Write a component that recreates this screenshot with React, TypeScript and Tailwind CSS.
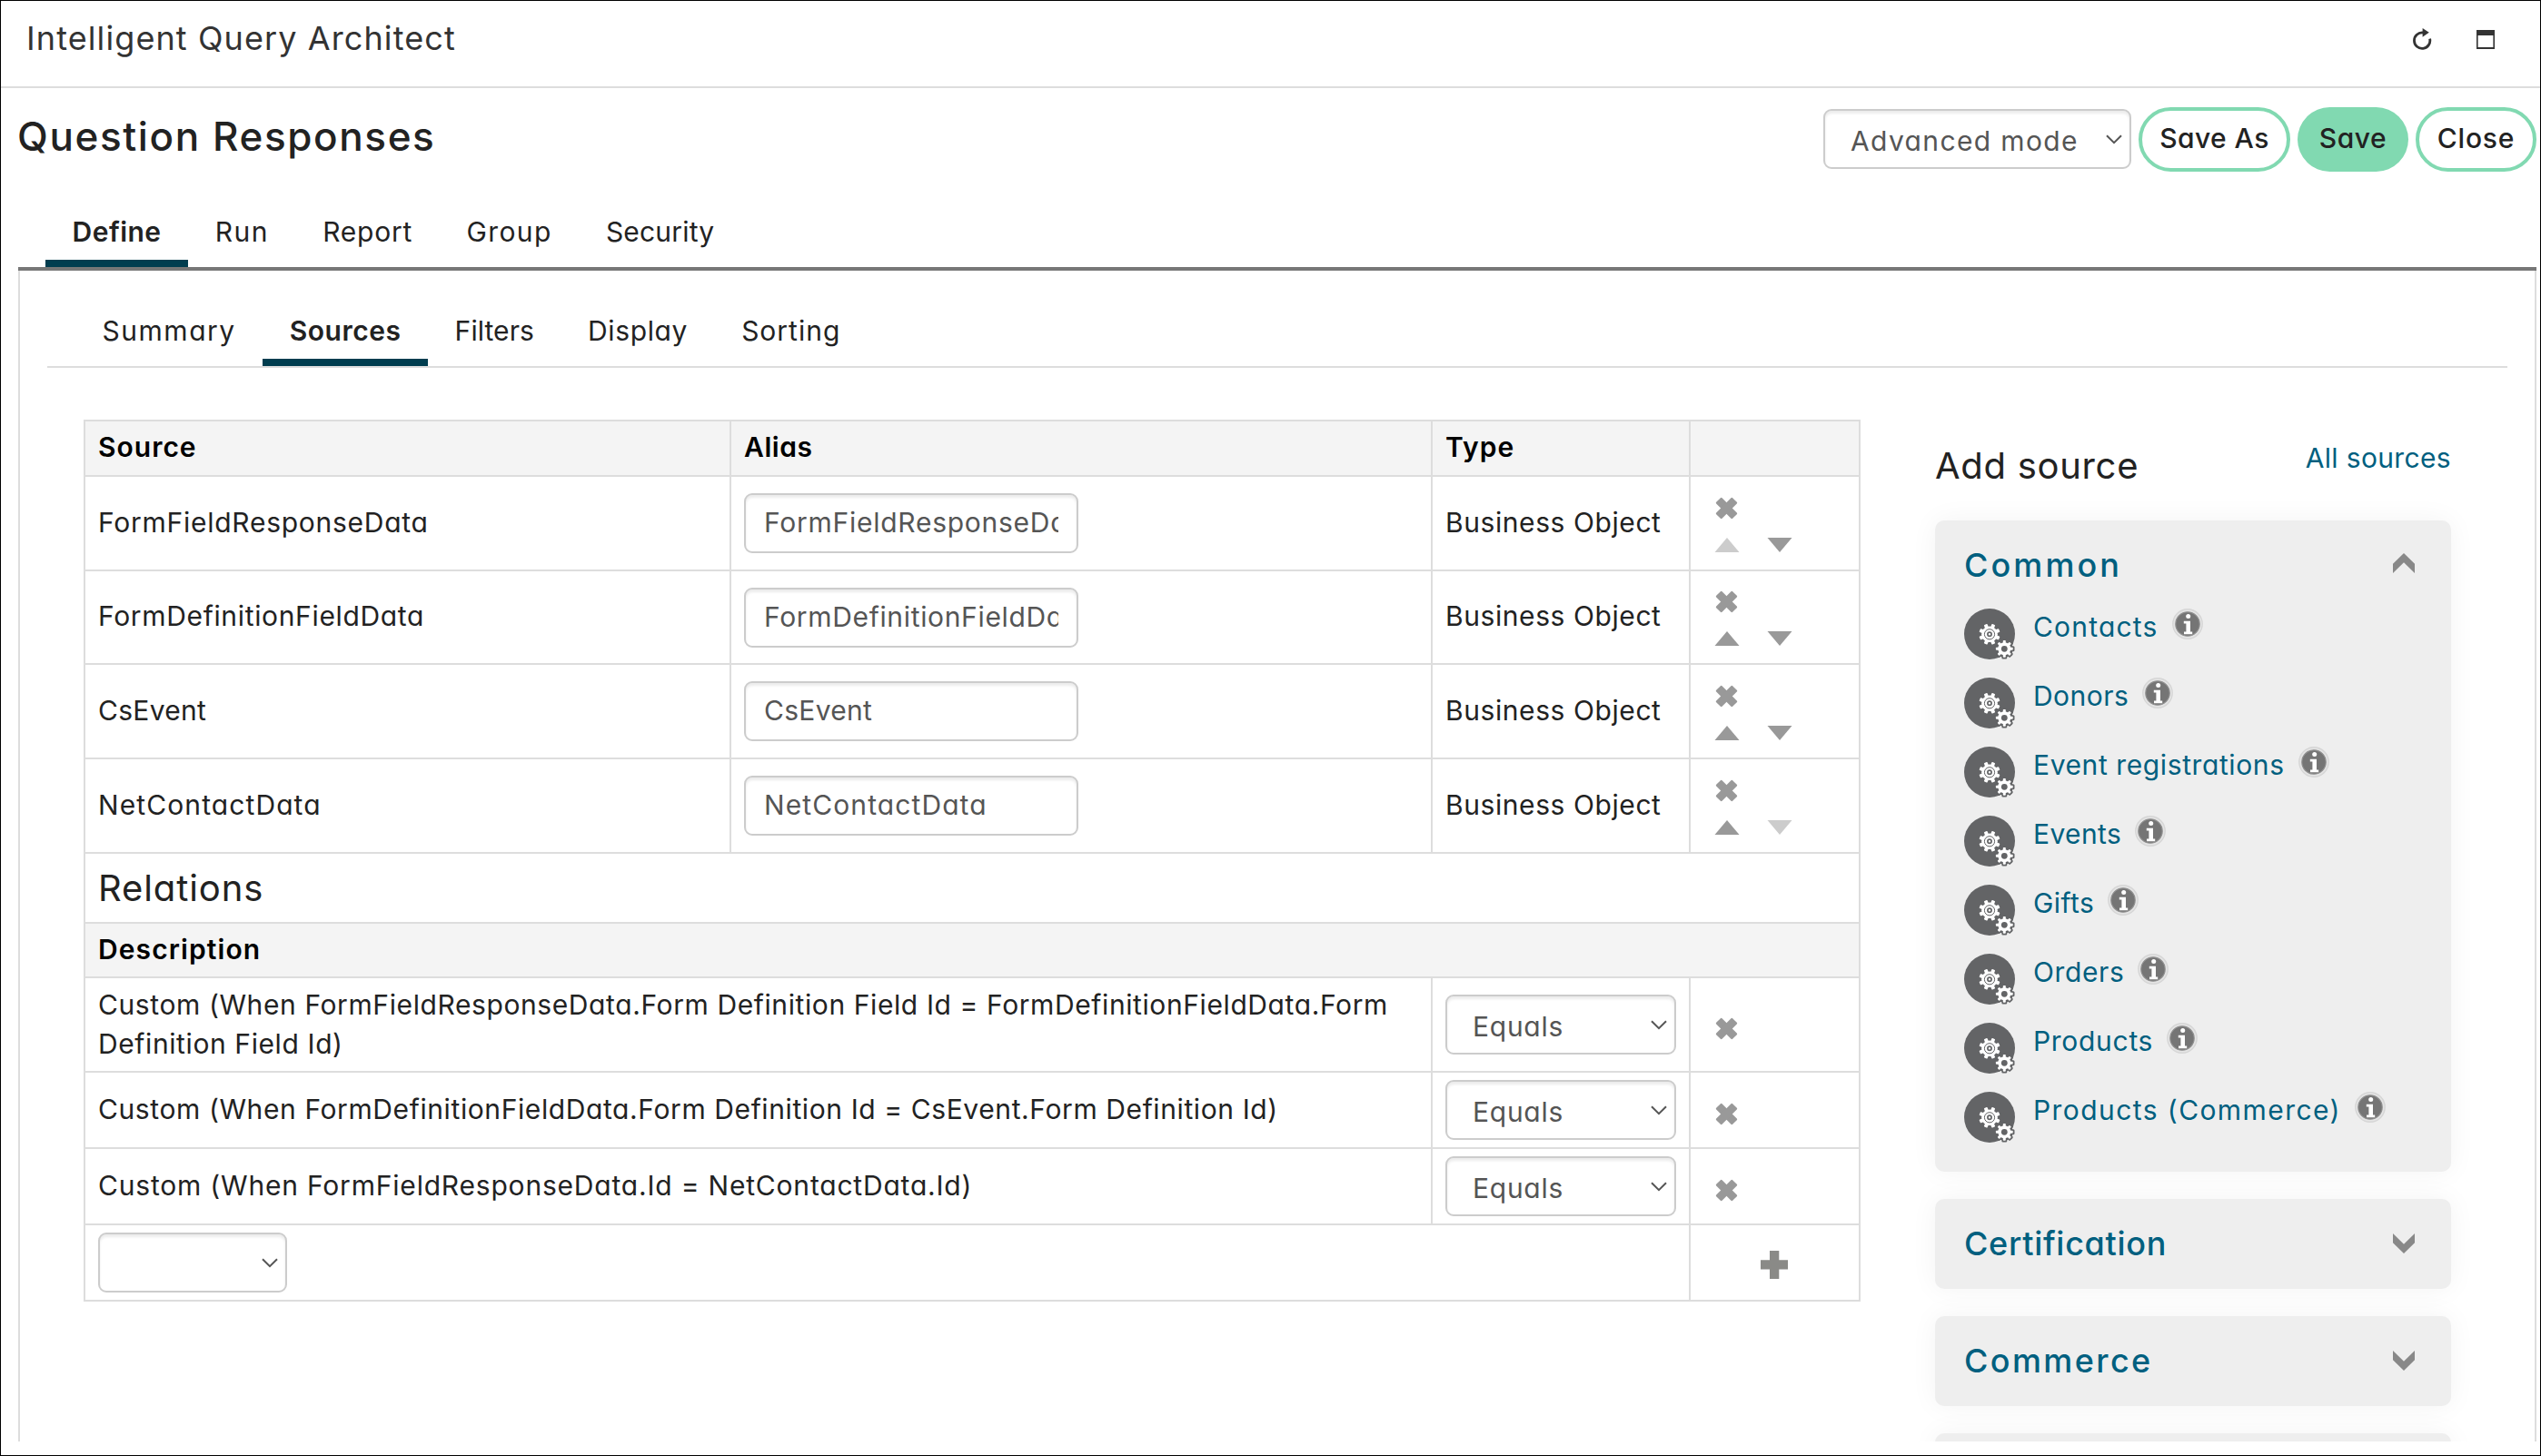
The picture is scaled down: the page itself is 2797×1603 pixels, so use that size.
import React, { useState } from 'react';

interface TextItem {
  label: string;
  tracking: string;
}

interface SourceRow {
  name: string;
  tracking: string;
}

interface RelationRow {
  text: string;
  tracking: string;
  height: string;
}

const mainTabs: TextItem[] = [
  { label: 'Define', tracking: 'tracking-[0.45px]' },
  { label: 'Run', tracking: 'tracking-[1.5px]' },
  { label: 'Report', tracking: 'tracking-[0.8px]' },
  { label: 'Group', tracking: 'tracking-[1.4px]' },
  { label: 'Security', tracking: 'tracking-[0.2px]' },
];

const subTabs: TextItem[] = [
  { label: 'Summary', tracking: 'tracking-[1.5px]' },
  { label: 'Sources', tracking: 'tracking-[0.5px]' },
  { label: 'Filters', tracking: 'tracking-[0.07px]' },
  { label: 'Display', tracking: 'tracking-[0.6px]' },
  { label: 'Sorting', tracking: 'tracking-[1px]' },
];

const sources: SourceRow[] = [
  { name: 'FormFieldResponseData', tracking: 'tracking-[0.74px]' },
  { name: 'FormDefinitionFieldData', tracking: 'tracking-[0.66px]' },
  { name: 'CsEvent', tracking: 'tracking-[0.3px]' },
  { name: 'NetContactData', tracking: 'tracking-[1.1px]' },
];

const rowHeights = ['h-[104px]', 'h-[103px]', 'h-[104px]', 'h-[104px]'];

const relations: RelationRow[] = [
  {
    text: 'Custom (When FormFieldResponseData.Form Definition Field Id = FormDefinitionFieldData.Form Definition Field Id)',
    tracking: 'tracking-[0.6px]',
    height: 'h-[104px]',
  },
  {
    text: 'Custom (When FormDefinitionFieldData.Form Definition Id = CsEvent.Form Definition Id)',
    tracking: 'tracking-[0.6px]',
    height: 'h-[84px]',
  },
  {
    text: 'Custom (When FormFieldResponseData.Id = NetContactData.Id)',
    tracking: 'tracking-[0.8px]',
    height: 'h-[84px]',
  },
];

const commonSources: TextItem[] = [
  { label: 'Contacts', tracking: 'tracking-[1.2px]' },
  { label: 'Donors', tracking: 'tracking-[0.47px]' },
  { label: 'Event registrations', tracking: 'tracking-[0.6px]' },
  { label: 'Events', tracking: 'tracking-[0.39px]' },
  { label: 'Gifts', tracking: 'tracking-[0.44px]' },
  { label: 'Orders', tracking: 'tracking-[0.62px]' },
  { label: 'Products', tracking: 'tracking-[0.7px]' },
  { label: 'Products (Commerce)', tracking: 'tracking-[1.42px]' },
];

const cell = 'border-2 border-[#dddddd] px-[14px] py-0';

const RefreshIcon = () => (
  <svg width="22" height="25" viewBox="0 0 22 25" fill="none">
    <path d="M19.6 12.6A8.7 8.7 0 1 1 12 6" stroke="#333" strokeWidth="2.8" />
    <path d="M11.6 1L18.8 5.8L11.6 10.8z" fill="#333" />
  </svg>
);

const WindowIcon = () => (
  <svg width="20" height="21" viewBox="0 0 20 21">
    <path d="M0 0H20V21H0zM1.6 6V19H18.4V6z" fill="#333" fillRule="evenodd" />
  </svg>
);

const SelectChevron = () => (
  <svg width="18" height="11" viewBox="0 0 18 11" fill="none">
    <path d="M1 1.2L9 9.2L17 1.2" stroke="#555" strokeWidth="2" />
  </svg>
);

const RemoveIcon = () => (
  <svg width="25" height="25" viewBox="0 0 25 25">
    <g fill="#999" transform="rotate(45 12.5 12.5)">
      <rect x="-0.2" y="8" width="25.4" height="9" rx="1.2" />
      <rect x="8" y="-0.2" width="9" height="25.4" rx="1.2" />
    </g>
  </svg>
);

const PlusIcon = () => (
  <svg width="30" height="31" viewBox="0 0 30 31">
    <path d="M10 0H20.3V10.3H30V20.6H20.3V31H10V20.6H0V10.3H10z" fill="#8a8a87" />
  </svg>
);

const Arrow = ({ up = false, disabled = false }: { up?: boolean; disabled?: boolean }) => (
  <svg width="28" height="16" viewBox="0 0 28 16">
    <path d={up ? 'M14 0L27.5 16H0.5z' : 'M0.5 0H27.5L14 16z'} fill={disabled ? '#ccc' : '#999'} />
  </svg>
);

const PanelChevron = ({ up }: { up: boolean }) => (
  <svg width="24" height="22" viewBox="0 0 24 22" className={up ? 'mb-[3px]' : 'rotate-180'}>
    <path d="M12 0L24 11.7V22L12 10.3L0 22V11.7z" fill="#888" />
  </svg>
);

const teeth = [0, 45, 90, 135, 180, 225, 270, 315];

const GearsIcon = () => (
  <svg width="56" height="56" viewBox="0 0 56 56" className="shrink-0">
    <circle cx="28" cy="28" r="28" fill="#636466" />
    <g fill="#fff" transform="translate(28 28.3)">
      <circle r="8.8" />
      {teeth.map((a) => (
        <rect key={a} x="-2" y="-11.6" width="4" height="5" rx="0.8" transform={`rotate(${a + 22.5})`} />
      ))}
      <circle r="5.6" fill="none" stroke="#636466" strokeWidth="1" />
      <circle r="2.1" fill="none" stroke="#636466" strokeWidth="1.7" />
    </g>
    <g transform="translate(44.3 44.3)">
      <g fill="#636466">
        <circle r="9.4" />
        {teeth.map((a) => (
          <rect key={a} x="-3" y="-11.2" width="6" height="5" rx="1.5" transform={`rotate(${a})`} />
        ))}
      </g>
      <g fill="#fff">
        <circle r="7" />
        {teeth.map((a) => (
          <rect key={a} x="-1.5" y="-9.4" width="3" height="5" rx="0.8" transform={`rotate(${a})`} />
        ))}
      </g>
      <circle r="3.4" fill="#636466" />
    </g>
  </svg>
);

const InfoIcon = () => (
  <svg width="34" height="34" viewBox="0 0 34 34" className="shrink-0">
    <circle cx="17" cy="17" r="16.2" fill="#e4e4e4" stroke="#d6d6d6" strokeWidth="1.4" />
    <circle cx="17" cy="17" r="13.2" fill="#757575" stroke="#8f8f8f" strokeWidth="1.2" />
    <circle cx="17.7" cy="8.6" r="2.5" fill="#fff" />
    <path d="M12.8 13.8H20V25.4H22.2V28.2H13V25.4H15.4V16.6H12.8z" fill="#fff" />
  </svg>
);

const SelectBox = ({ label, className, tracking = '' }: { label: string; className: string; tracking?: string }) => (
  <button
    className={`flex h-[66px] items-center justify-between rounded-[9px] border-2 border-[#cccccc] bg-white pr-[8px] pl-[28px] text-[#555555] shadow-[inset_0_3px_3px_rgba(0,0,0,0.08)] ${className}`}
  >
    <span className={`pt-[4px] leading-[45px] ${tracking}`}>{label}</span>
    <SelectChevron />
  </button>
);

const Header = () => (
  <header className="flex h-[96px] shrink-0 justify-between border-b-2 border-[#dddddd] pr-[50px] pl-[28px]">
    <h1 className="pt-[14px] text-[36px] leading-[54px] tracking-[1.1px] text-[#333333]">
      Intelligent Query Architect
    </h1>
    <div className="flex items-start gap-[49px] pt-[29px]">
      <RefreshIcon />
      <div className="pt-[3px]">
        <WindowIcon />
      </div>
    </div>
  </header>
);

const Toolbar = () => (
  <div className="flex shrink-0 items-start justify-between pt-[21px] pr-[4px] pl-[18px]">
    <h2 className="text-[44px] leading-[64px] font-medium tracking-[1.6px]">Question Responses</h2>
    <div className="flex items-center gap-[8px] font-medium">
      <SelectBox label="Advanced mode" className="mb-[1px] w-[339px] font-normal" tracking="tracking-[1.36px]" />
      <button className="h-[71px] w-[167px] rounded-full border-4 border-[#81d9b1] pb-[3px] tracking-[0.44px]">
        Save As
      </button>
      <button className="h-[71px] w-[122px] rounded-full bg-[#81d9b1] pb-[3px] tracking-[0.6px]">Save</button>
      <button className="h-[71px] w-[133px] rounded-full border-4 border-[#81d9b1] pb-[3px] tracking-[0.79px]">
        Close
      </button>
    </div>
  </div>
);

interface TabBarProps {
  tabs: TextItem[];
  active: string;
  onSelect: (label: string) => void;
  className: string;
}

const TabBar: React.FC<TabBarProps> = ({ tabs, active, onSelect, className }) => (
  <nav className={`flex shrink-0 ${className}`}>
    {tabs.map((tab) => (
      <button
        key={tab.label}
        onClick={() => onSelect(tab.label)}
        className={`h-[70px] border-b-8 px-[29.6px] ${tab.tracking} ${
          tab.label === active ? 'border-[#003d4f] font-semibold' : 'border-transparent'
        }`}
      >
        {tab.label}
      </button>
    ))}
  </nav>
);

const SourcesTable = () => (
  <table className="w-[1956px] shrink-0 table-fixed border-collapse self-start text-left">
    <colgroup>
      <col className="w-[711px]" />
      <col className="w-[772px]" />
      <col className="w-[284px]" />
      <col className="w-[187px]" />
    </colgroup>
    <tbody>
      <tr className="h-[61px] bg-[#f4f4f4] text-black">
        <th className={`${cell} pb-[2px] font-semibold tracking-[1px]`}>Source</th>
        <th className={`${cell} pb-[2px] font-semibold tracking-[0.56px]`}>Alias</th>
        <th className={`${cell} pb-[2px] font-semibold tracking-[1.1px]`}>Type</th>
        <th className={cell} />
      </tr>
      {sources.map((row, i) => (
        <tr key={row.name} className={rowHeights[i]}>
          <td className={`${cell} pb-[2px] ${row.tracking}`}>{row.name}</td>
          <td className={cell}>
            <input
              defaultValue={row.name}
              className={`block h-[66px] w-[368px] rounded-[9px] border-2 border-[#cccccc] bg-white px-[20px] pb-[2px] text-[#555555] shadow-[inset_0_3px_3px_rgba(0,0,0,0.08)] ${row.tracking}`}
            />
          </td>
          <td className={`${cell} pb-[2px] tracking-[0.58px]`}>Business Object</td>
          <td className={cell}>
            <div className="flex flex-col gap-[20px] pt-[2px] pl-[12px]">
              <button className="w-[25px] pl-[1px]">
                <RemoveIcon />
              </button>
              <div className="flex gap-[30px]">
                <Arrow up disabled={i === 0} />
                <Arrow disabled={i === sources.length - 1} />
              </div>
            </div>
          </td>
        </tr>
      ))}
      <tr className="h-[77px]">
        <td colSpan={4} className={`${cell} text-[40px] leading-[60px] tracking-[0.9px]`}>
          Relations
        </td>
      </tr>
      <tr className="h-[60px] bg-[#f4f4f4] text-black">
        <th colSpan={4} className={`${cell} pb-[2px] font-semibold tracking-[1.1px]`}>
          Description
        </th>
      </tr>
      {relations.map((rel) => (
        <tr key={rel.text} className={rel.height}>
          <td colSpan={2} className={`${cell} pb-[1px] leading-[43px] ${rel.tracking}`}>
            {rel.text}
          </td>
          <td className={cell}>
            <SelectBox label="Equals" className="w-[254px]" tracking="tracking-[0.74px]" />
          </td>
          <td className={cell}>
            <button className="block pt-[9px] pl-[13px]">
              <RemoveIcon />
            </button>
          </td>
        </tr>
      ))}
      <tr className="h-[84px]">
        <td colSpan={3} className={cell}>
          <SelectBox label="" className="w-[208px]" />
        </td>
        <td className={cell}>
          <button className="mx-auto block pt-[4px] pr-[2px]">
            <PlusIcon />
          </button>
        </td>
      </tr>
    </tbody>
  </table>
);

interface PanelProps {
  title: string;
  tracking: string;
  open?: boolean;
  children?: React.ReactNode;
}

const Panel: React.FC<PanelProps> = ({ title, tracking, open = false, children }) => (
  <section className="shrink-0 rounded-[10px] bg-[#eeeeee] pb-[2px] pl-[32px] text-[#005f7f] shadow-[0_0_30px_rgba(0,0,0,0.05)]">
    <div className="flex h-[97px] items-center justify-between pr-[40px]">
      <h4 className={`text-[36px] leading-[54px] font-medium ${tracking}`}>{title}</h4>
      <PanelChevron up={open} />
    </div>
    {children}
  </section>
);

const AddSource = () => (
  <aside className="flex w-[568px] shrink-0 flex-col gap-[30px]">
    <div className="flex h-[61px] shrink-0 items-start justify-between">
      <h3 className="pt-[1px] text-[40px] leading-[60px] tracking-[0.7px]">Add source</h3>
      <a className="leading-[45px] tracking-[0.35px] text-[#005f7f]">All sources</a>
    </div>
    <Panel title="Common" tracking="tracking-[3.1px]" open>
      <ul className="flex flex-col gap-[20px] pb-[30px]">
        {commonSources.map((item) => (
          <li key={item.label} className="flex items-start">
            <GearsIcon />
            <a className={`pr-[15px] pl-[20px] leading-[40px] ${item.tracking}`}>{item.label}</a>
            <InfoIcon />
          </li>
        ))}
      </ul>
    </Panel>
    <Panel title="Certification" tracking="tracking-[0.7px]" />
    <Panel title="Commerce" tracking="tracking-[2.4px]" />
    <Panel title="" tracking="" />
  </aside>
);

const App: React.FC = () => {
  const [mainTab, setMainTab] = useState('Define');
  const [subTab, setSubTab] = useState('Sources');

  return (
    <div className="flex h-[1603px] w-[2797px] flex-col overflow-hidden border border-black bg-white font-[Inter,sans-serif] text-[30px] leading-[45px] text-[#222222] [font-feature-settings:'cv11']">
      <Header />
      <Toolbar />
      <TabBar
        tabs={mainTabs}
        active={mainTab}
        onSelect={setMainTab}
        className="mt-[35px] mr-[4px] ml-[19px] border-b-4 border-[#777777] pl-[30px]"
      />
      <main className="mr-[4px] mb-[15px] ml-[19px] flex min-h-0 flex-1 flex-col overflow-hidden border-x-2 border-[#dddddd]">
        <TabBar
          tabs={subTabs}
          active={subTab}
          onSelect={setSubTab}
          className="mt-[35px] mr-[30px] ml-[30px] border-b-2 border-[#dddddd] pl-[31px]"
        />
        <div className="flex items-start justify-between pr-[92px] pl-[70px]">
          <div className="pt-[57px]">
            <SourcesTable />
          </div>
          <div className="pt-[77px]">
            <AddSource />
          </div>
        </div>
      </main>
    </div>
  );
};

export default App;
